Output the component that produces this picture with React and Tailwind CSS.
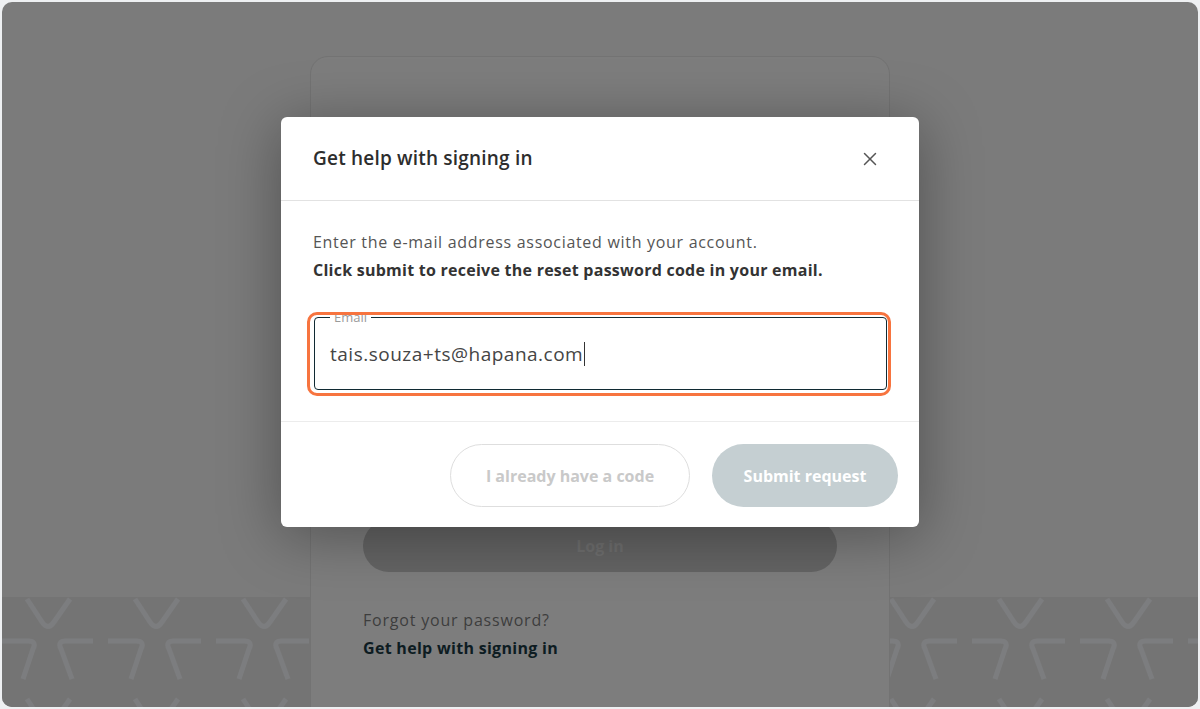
import { X } from 'lucide-react';

const FONT = { fontFamily: '"Open Sans", "Noto Sans", sans-serif' };

function Pattern() {
  return (
    <svg className="absolute inset-x-0 bottom-0 h-[110px] w-full" aria-hidden="true">
      <defs>
        <pattern id="hx" width="108" height="100" patternUnits="userSpaceOnUse" x="-2" y="0">
          <g fill="none" stroke="#7c7d7f" strokeWidth="5">
            <path d="M27 2 L42 25 Q48 34 54 25 L70 2" />
            <path d="M0 44 L28 44 Q37 44 33 52 L23 82" />
            <path d="M93 44 L66 44 Q57 44 61 52 L72 82" />
          </g>
        </pattern>
      </defs>
      <rect width="100%" height="100%" fill="#747474" />
      <rect width="100%" height="100%" fill="url(#hx)" />
    </svg>
  );
}

export default function App() {
  return (
    <div className="h-[709px] w-[1200px] overflow-hidden bg-[#eef0f2] p-[2px]" style={FONT}>
      <div className="relative h-full w-full overflow-hidden rounded-[10px] bg-[#7b7b7b]">
        <Pattern />

        {/* Login card behind the overlay */}
        <div className="relative mx-auto mt-[54px] h-[700px] w-[580px] rounded-[18px] border border-[#737373] bg-[#7d7d7d] px-[52px]">
          <div className="h-[463px]" />
          <button className="h-[52px] w-full rounded-full bg-[#646464] text-[16px] font-bold text-[#6f6f6f]">
            Log in
          </button>
          <p className="mt-[34px] text-[16px] leading-[28px] tracking-[0.8px] text-[#3d3d3d]">Forgot your password?</p>
          <p className="text-[16px] font-bold leading-[28px] tracking-[0.3px] text-[#0d1c22]">Get help with signing in</p>
        </div>

        {/* Modal */}
        <div className="absolute left-[279px] top-[115px] w-[638px] rounded-[6px] bg-white shadow-[0_8px_60px_rgba(0,0,0,0.35)]">
          <div className="flex h-[84px] items-center justify-between border-b border-[#e2e2e2] pl-[32px] pr-[38px]">
            <h2 className="text-[19px] font-semibold tracking-[0.2px] text-[#2d2d2d]">Get help with signing in</h2>
            <X className="h-[22px] w-[22px] text-[#555]" strokeWidth={1.6} />
          </div>

          <div className="px-[32px] pb-[31px] pt-[27px]">
            <p className="text-[16px] leading-[28px] tracking-[0.7px] text-[#555]">Enter the e-mail address associated with your account.</p>
            <p className="text-[16px] font-bold leading-[28px] tracking-[0.25px] text-[#333]">Click submit to receive the reset password code in your email.</p>

            <div className="relative mt-[25px] ml-[1px]">
              <fieldset className="h-[81px] rounded-[4px] border-[1.5px] border-[#102a33] px-[15px]">
                <legend className="px-[4px] text-[13px] leading-[16px] text-[#9a9a9a]">Email</legend>
                <div className="mt-[15px] flex items-center text-[19px] tracking-[0.5px] text-[#454545]">
                  <span>tais.souza+ts@hapana.com</span>
                  <span className="ml-[1px] h-[24px] w-[1px] bg-[#333]" />
                </div>
              </fieldset>
              <div className="pointer-events-none absolute -left-[7px] -right-[4px] bottom-[-6px] top-[3px] rounded-[10px] border-[3px] border-[#f7743f]" />
            </div>
          </div>

          <div className="flex justify-end gap-[22px] border-t border-[#ececec] pb-[20px] pl-[32px] pr-[21px] pt-[22px]">
            <button className="h-[63px] w-[240px] rounded-full border border-[#dedede] text-[16px] font-bold text-[#c9c9c9]">
              I already have a code
            </button>
            <button className="h-[63px] w-[186px] rounded-full bg-[#c5cfd2] text-[16px] font-bold text-white">
              Submit request
            </button>
          </div>
        </div>
      </div>
    </div>
  );
}
